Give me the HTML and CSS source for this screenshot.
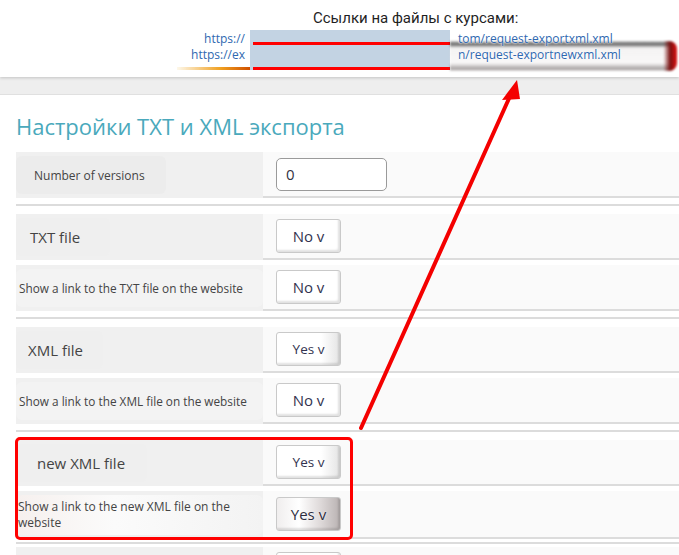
FILE: index.html
```html
<!DOCTYPE html>
<html lang="ru">
<head>
<meta charset="utf-8">
<link rel="stylesheet" href="styles.css">
</head>
<body>
<header class="links-panel">
  <h2 class="links-title">Ссылки на файлы с курсами:</h2>
  <div class="links">
    <span class="l-head">https://</span><span class="l-gap"></span><span class="l-tail">tom/request-exportxml.xml</span>
    <span class="l-head">https://ex</span><span class="l-gap"></span><span class="l-tail">n/request-exportnewxml.xml</span>
  </div>
  <div class="redact"></div>
  <div class="redline redline-1"></div>
  <div class="redline redline-2"></div>
  <div class="smudge"></div>
  <div class="smudge-left"></div>
</header>
<div class="band"></div>

<main class="settings">
  <h1 class="settings-title">Настройки TXT и XML экспорта</h1>

  <div class="group">
    <div class="row">
      <div class="label"><span class="pill pill-md">Number of versions</span></div>
      <div class="control"><div class="input">0</div></div>
    </div>
  </div>
  <div class="sep"></div>

  <div class="group">
    <div class="row">
      <div class="label"><span class="pill pill-lg pad-14">TXT file</span></div>
      <div class="control"><div class="select">No v</div></div>
    </div>
    <div class="row">
      <div class="label"><span class="pill pill-sm">Show a link to the TXT file on the website</span></div>
      <div class="control"><div class="select">No v</div></div>
    </div>
  </div>
  <div class="sep"></div>

  <div class="group">
    <div class="row">
      <div class="label"><span class="pill pill-lg pad-12">XML file</span></div>
      <div class="control"><div class="select select-yes">Yes v</div></div>
    </div>
    <div class="row">
      <div class="label"><span class="pill pill-sm">Show a link to the XML file on the website</span></div>
      <div class="control"><div class="select">No v</div></div>
    </div>
  </div>
  <div class="sep"></div>

  <div class="group">
    <div class="row">
      <div class="label"><span class="pill pill-lg pad-21">new XML file</span></div>
      <div class="control"><div class="select select-yes">Yes v</div></div>
    </div>
    <div class="row row-tall">
      <div class="label"><span class="pill pill-sm pill-wrap">Show a link to the new XML file on the website</span></div>
      <div class="control"><div class="select select-dark">Yes v</div></div>
    </div>
  </div>
  <div class="sep sep-short"></div>

  <div class="group">
    <div class="row">
      <div class="label"></div>
      <div class="control"><div class="select"></div></div>
    </div>
  </div>

  <div class="highlight"></div>
</main>

<svg class="arrow" width="679" height="555" viewBox="0 0 679 555">
  <line x1="361" y1="428" x2="511" y2="94" stroke="#f40000" stroke-width="4" stroke-linecap="round"/>
  <polygon points="517,80 502,100 520,99" fill="#f40000"/>
</svg>
</body>
</html>
```

FILE: styles.css
```css
html, body {
  margin: 0;
  padding: 0;
  background: #ffffff;
  width: 679px;
  height: 555px;
  overflow: hidden;
  position: relative;
  font-family: "Open Sans", "Liberation Sans", sans-serif;
}

.links-panel {
  position: relative;
  height: 77px;
  background: #ffffff;
  box-shadow: 0 1px 3px rgba(0, 0, 0, 0.18);
  z-index: 1;
}

.links-title {
  margin: 0;
  padding: 9px 0 0 313px;
  font-family: Roboto, "Liberation Sans", sans-serif;
  font-weight: 400;
  font-size: 15px;
  line-height: 18px;
  color: #1f1f1f;
}

.links {
  display: grid;
  grid-template-columns: 245px 212px auto;
  grid-auto-rows: 16px;
  margin-top: 4px;
  font-size: 12px;
  line-height: 16px;
  color: #2f68b0;
}

.l-head {
  text-align: right;
}

.l-tail {
  padding-left: 1px;
  position: relative;
  z-index: 2;
  text-shadow: 0 0 2px #fff, 0 0 2px #fff;
}

.redact {
  position: absolute;
  left: 250px;
  top: 30px;
  width: 200px;
  height: 40px;
  background: #c3d3e3;
}

.redline {
  position: absolute;
  left: 253px;
  width: 197px;
  height: 3px;
  background: #ff0000;
}

.redline-1 { top: 42px; }
.redline-2 { top: 67px; }

.smudge {
  position: absolute;
  left: 450px;
  top: 41px;
  width: 227px;
  height: 30px;
  background:
    linear-gradient(90deg, rgba(255,255,255,0) 0%, rgba(255,255,255,0) 94%, #7a1010 97%, #e01010 100%),
    linear-gradient(180deg, rgba(40,40,40,0.2) 0, rgba(30,30,30,0.7) 3px, rgba(225,220,220,0.35) 7px, rgba(235,230,230,0.3) 22px, rgba(90,80,80,0.55) 28px, rgba(40,30,30,0.1) 30px);
  border-radius: 0 8px 8px 0;
  filter: blur(1px);
}

.smudge-left {
  position: absolute;
  left: 177px;
  top: 67px;
  width: 73px;
  height: 3px;
  background: linear-gradient(90deg, rgba(240,190,60,0.1), #f0a020 60%, #d05000);
  filter: blur(0.6px);
}

.band {
  height: 17px;
  background: #eeeeee;
  border-bottom: 1px solid #e0e0e0;
}

.settings {
  position: relative;
  padding: 16px 0 0 16px;
}

.settings-title {
  margin: 0 0 11px;
  font-family: "Open Sans", sans-serif;
  font-weight: 400;
  font-size: 22px;
  line-height: 30px;
  color: #4aa9bc;
}

.group {
  display: flex;
  flex-direction: column;
  gap: 5px;
}

.row {
  display: grid;
  grid-template-columns: 247px 1fr;
  height: 46px;
}

.row-tall {
  height: 48px;
}

.label {
  background: #f0f0f0;
  display: flex;
  align-items: center;
  color: #444444;
}

.pill {
  display: flex;
  align-items: center;
  align-self: stretch;
  background: #ececec;
  border-radius: 6px;
  margin: 4px 0;
  white-space: nowrap;
}

.pill-md {
  font-size: 12px;
  padding: 0 21px 0 18px;
}

.pill-lg {
  font-size: 15px;
  background: #efefef;
  width: 80px;
}

.pad-14 { padding-left: 14px; }
.pad-12 { padding-left: 12px; width: 75px; }
.pad-21 { padding-left: 21px; width: 110px; }

.pill-sm {
  font-size: 11.8px;
  padding-left: 3px;
  background: #f3f3f3;
  flex: 1;
}

.pill-wrap {
  white-space: normal;
  font-size: 12px;
  line-height: 16px;
  padding-left: 2px;
  padding-right: 18px;
  background: linear-gradient(90deg, #f6f0ee 0%, #fbfbfb 40%, #f3f3f3 100%);
}

.control {
  background: #fafafa;
  border-bottom: 2px solid #dcdcdc;
  display: flex;
  align-items: center;
  padding-left: 13px;
}

.input {
  box-sizing: border-box;
  width: 111px;
  height: 33px;
  border: 1px solid #9a9a9a;
  border-radius: 5px;
  background: #ffffff;
  padding-left: 9px;
  font-size: 15px;
  line-height: 31px;
  color: #333344;
}

.select {
  box-sizing: border-box;
  width: 65px;
  height: 34px;
  border: 1px solid #c9c9c9;
  border-radius: 3px;
  background: #ffffff;
  box-shadow: inset -2px -2px 2px rgba(0, 0, 0, 0.12);
  display: flex;
  align-items: center;
  justify-content: center;
  font-size: 15px;
  color: #33334f;
}

.select-yes {
  font-size: 13.5px;
  background: linear-gradient(90deg, #ffffff 0%, #ffffff 70%, #e4e4e4 100%);
}

.select-dark {
  font-size: 15px;
  background: linear-gradient(90deg, #f0eeee 0%, #ffffff 35%, #ddd8d8 70%, #b9b2b2 100%);
  color: #2e2e40;
  text-shadow: 0 0 2px #fff;
}

.sep {
  height: 2px;
  background: #dcdcdc;
  margin: 6px 0 8px;
}

.sep-short {
  margin: 3px 0 3px;
}

.highlight {
  position: absolute;
  left: 15px;
  top: 342px;
  width: 332px;
  height: 97px;
  border: 3px solid #ff0000;
  border-radius: 5px;
}

.arrow {
  position: absolute;
  left: 0;
  top: 0;
  pointer-events: none;
  z-index: 5;
}
```
